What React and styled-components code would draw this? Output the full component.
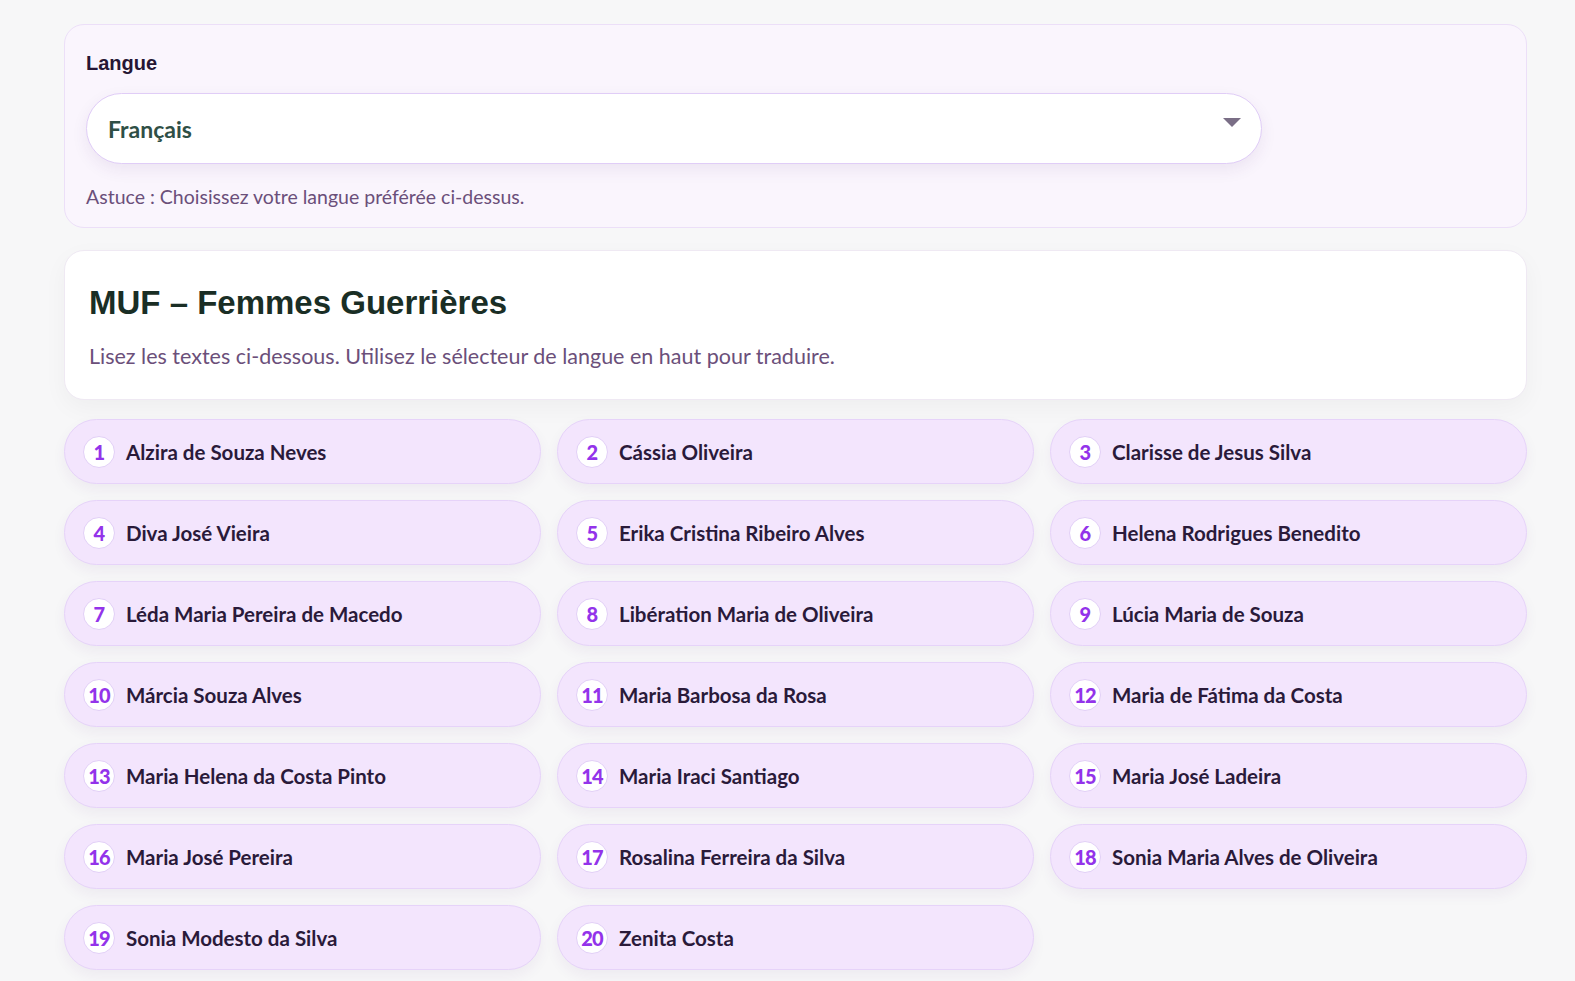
import React from "react";
import styled, { createGlobalStyle } from "styled-components";

const Global = createGlobalStyle`
  body { margin: 0; background: #f7f7f8; font-family: "Lato", "Open Sans", sans-serif; }
`;
const Page = styled.div`
  padding: 24px 48px 16px 64px;
  display: flex; flex-direction: column; gap: 22px;
  max-width: 1463px;
`;
const LangPanel = styled.div`
  background: #faf5fd; border: 1px solid #ecdff8; border-radius: 20px;
  padding: 27px 20px 19px 21px;
`;
const Label = styled.div`
  font-family: "Liberation Sans", Arial, sans-serif; font-weight: 700; font-size: 20px; color: #261634;
`;
const Select = styled.div`
  margin-top: 18px; width: 1176px; height: 71px; box-sizing: border-box;
  background: #fff; border: 1px solid #e0cdf7; border-radius: 36px;
  box-shadow: 0 6px 16px rgba(80,40,120,0.08);
  display: flex; align-items: center; justify-content: space-between; padding: 0 20px 0 21px;
  font-weight: 700; font-size: 23px; color: #2f4f46;
`;
const Caret = styled.div`
  width: 0; height: 0; border-left: 9px solid transparent; border-right: 9px solid transparent;
  border-top: 9px solid #7a6e86; margin-top: -12px;
`;
const Hint = styled.div`
  margin-top: 21px; font-size: 19.5px; color: #6b4f7a;
`;
const Card = styled.div`
  background: #fff; border: 1px solid #efe9f3; border-radius: 20px;
  padding: 33px 24px 30px 24px; box-shadow: 0 8px 24px rgba(0,0,0,0.04);
`;
const Title = styled.h1`
  margin: 0; font-family: "Liberation Sans", Arial, sans-serif; font-weight: 700; font-size: 33px; color: #1a2e25;
`;
const Sub = styled.p`
  margin: 21px 0 0; font-size: 21.5px; color: #6b4f7a;
`;
const Grid = styled.div`
  display: grid; grid-template-columns: repeat(3, 1fr); gap: 16px; margin-top: -3px;
`;
const Pill = styled.div`
  height: 65px; box-sizing: border-box; background: #f3e5fd; border: 1px solid #e6d3f9;
  border-radius: 33px; display: flex; align-items: center; gap: 11px; padding-left: 18px;
  box-shadow: 0 6px 14px rgba(80,40,120,0.06);
`;
const Num = styled.div`
  width: 32px; height: 32px; border-radius: 50%; background: #fff; border: 1px solid #e2cff7;
  box-sizing: border-box; display: flex; align-items: center; justify-content: center;
  color: #9333ea; font-weight: 900; font-size: 20px; letter-spacing: -0.8px;
`;
const Name = styled.div`
  font-weight: 700; font-size: 20.5px; color: #2a1a3a;
`;

const names = ["Alzira de Souza Neves","Cássia Oliveira","Clarisse de Jesus Silva","Diva José Vieira","Erika Cristina Ribeiro Alves","Helena Rodrigues Benedito","Léda Maria Pereira de Macedo","Libération Maria de Oliveira","Lúcia Maria de Souza","Márcia Souza Alves","Maria Barbosa da Rosa","Maria de Fátima da Costa","Maria Helena da Costa Pinto","Maria Iraci Santiago","Maria José Ladeira","Maria José Pereira","Rosalina Ferreira da Silva","Sonia Maria Alves de Oliveira","Sonia Modesto da Silva","Zenita Costa"];

export default function App() {
  return (
    <>
      <Global />
      <Page>
        <LangPanel>
          <Label>Langue</Label>
          <Select><span>Français</span><Caret /></Select>
          <Hint>Astuce : Choisissez votre langue préférée ci-dessus.</Hint>
        </LangPanel>
        <Card>
          <Title>MUF – Femmes Guerrières</Title>
          <Sub>Lisez les textes ci-dessous. Utilisez le sélecteur de langue en haut pour traduire.</Sub>
        </Card>
        <Grid>
          {names.map((n, i) => (
            <Pill key={i}><Num>{i + 1}</Num><Name>{n}</Name></Pill>
          ))}
        </Grid>
      </Page>
    </>
  );
}
